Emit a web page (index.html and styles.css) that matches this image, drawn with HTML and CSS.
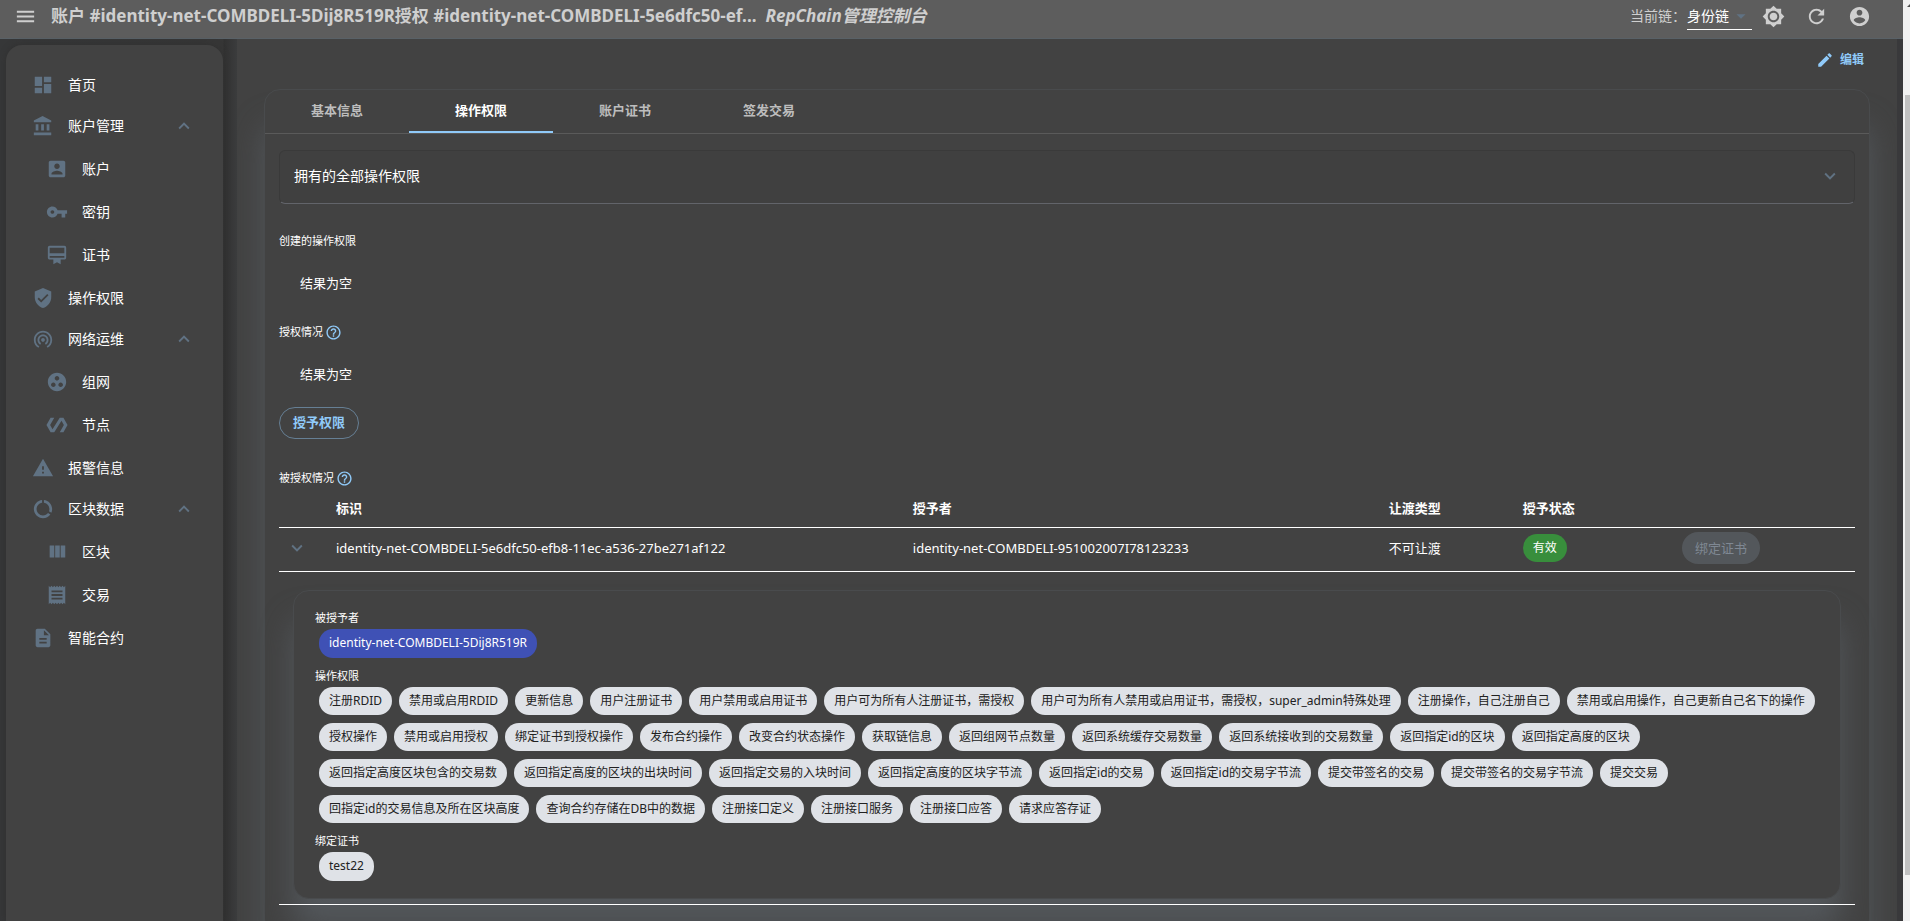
FILE: index.html
```html
<!DOCTYPE html>
<html lang="zh-CN">
<head>
<meta charset="utf-8">
<title>RepChain管理控制台</title>
<link rel="stylesheet" href="styles.css">
</head>
<body>
<svg class="sprite" aria-hidden="true">
  <symbol id="menu" viewBox="0 0 24 24"><path d="M3 18h18v-2H3v2zm0-5h18v-2H3v2zm0-7v2h18V6H3z"/></symbol>
  <symbol id="dashboard" viewBox="0 0 24 24"><path d="M3 13h8V3H3v10zm0 8h8v-6H3v6zm10 0h8V11h-8v10zm0-18v6h8V3h-8z"/></symbol>
  <symbol id="bank" viewBox="0 0 24 24"><path d="M4 10v7h3v-7H4zm6 0v7h3v-7h-3zM2 22h19v-3H2v3zm14-12v7h3v-7h-3zm-4.500-9L2 6v2h19V6l-9.500-5z"/></symbol>
  <symbol id="account-box" viewBox="0 0 24 24"><path d="M3 5v14c0 1.100.890 2 2 2h14c1.100 0 2-.9 2-2V5c0-1.100-.9-2-2-2H5c-1.110 0-2 .9-2 2zm12 4c0 1.660-1.340 3-3 3s-3-1.340-3-3 1.340-3 3-3 3 1.340 3 3zm-9 8c0-2 4-3.100 6-3.100s6 1.100 6 3.100v1H6v-1z"/></symbol>
  <symbol id="key" viewBox="0 0 24 24"><path d="M12.650 10C11.830 7.670 9.610 6 7 6c-3.310 0-6 2.690-6 6s2.690 6 6 6c2.610 0 4.830-1.670 5.650-4H17v4h4v-4h2v-4H12.650zM7 14c-1.100 0-2-.9-2-2s.9-2 2-2 2 .9 2 2-.9 2-2 2z"/></symbol>
  <symbol id="membership" viewBox="0 0 24 24"><path d="M20 2H4c-1.110 0-2 .89-2 2v11c0 1.110.890 2 2 2h4v5l4-2 4 2v-5h4c1.110 0 2-.89 2-2V4c0-1.110-.89-2-2-2zm0 13H4v-2h16v2zm0-5H4V4h16v6z"/></symbol>
  <symbol id="shield" viewBox="0 0 24 24"><path d="M12 1L3 5v6c0 5.550 3.840 10.740 9 12 5.160-1.260 9-6.450 9-12V5l-9-4zm-2 16l-4-4 1.410-1.410L10 14.170l6.590-6.590L18 9l-8 8z"/></symbol>
  <symbol id="tethering" viewBox="0 0 24 24"><path d="M12 11c-1.100 0-2 .9-2 2s.9 2 2 2 2-.9 2-2-.9-2-2-2zm6 2c0-3.310-2.690-6-6-6s-6 2.690-6 6c0 2.220 1.210 4.150 3 5.190l1-1.740c-1.190-.7-2-1.970-2-3.450 0-2.210 1.790-4 4-4s4 1.790 4 4c0 1.480-.81 2.750-2 3.450l1 1.740c1.790-1.040 3-2.970 3-5.190zM12 3C6.480 3 2 7.480 2 13c0 3.700 2.010 6.920 4.990 8.650l1-1.730C5.610 18.530 4 15.960 4 13c0-4.420 3.580-8 8-8s8 3.580 8 8c0 2.960-1.610 5.530-4 6.920l1 1.730c2.990-1.730 5-4.950 5-8.650 0-5.520-4.480-10-10-10z"/></symbol>
  <symbol id="group-work" viewBox="0 0 24 24"><path d="M12 2C6.480 2 2 6.480 2 12s4.480 10 10 10 10-4.480 10-10S17.520 2 12 2zM8 17.500c-1.380 0-2.500-1.120-2.500-2.500s1.120-2.500 2.500-2.500 2.500 1.120 2.500 2.500-1.120 2.500-2.500 2.500zM9.500 8c0-1.380 1.120-2.500 2.500-2.500s2.500 1.120 2.500 2.500-1.120 2.500-2.500 2.500S9.500 9.380 9.500 8zm6.500 9.500c-1.380 0-2.500-1.120-2.500-2.500s1.120-2.500 2.500-2.500 2.500 1.120 2.500 2.500-1.120 2.500-2.500 2.500z"/></symbol>
  <symbol id="polymer" viewBox="0 0 24 24"><path d="M19 4h-4L7.110 16.630 4.500 12 9 4H5L.5 12 5 20h4l7.890-12.630L19.500 12 15 20h4l4.500-8z"/></symbol>
  <symbol id="warning" viewBox="0 0 24 24"><path d="M1 21h22L12 2 1 21zm12-3h-2v-2h2v2zm0-4h-2v-4h2v4z"/></symbol>
  <symbol id="data-usage" viewBox="0 0 24 24"><path d="M13 2.050v3.030c3.390.490 6 3.390 6 6.920 0 .9-.18 1.750-.48 2.540l2.600 1.530c.56-1.240.880-2.620.880-4.070 0-5.180-3.950-9.450-9-9.950zM12 19c-3.870 0-7-3.130-7-7 0-3.530 2.610-6.430 6-6.920V2.050c-5.060.500-9 4.760-9 9.950 0 5.520 4.470 10 9.990 10 3.310 0 6.240-1.610 8.060-4.090l-2.600-1.530C16.170 17.980 14.210 19 12 19z"/></symbol>
  <symbol id="columns" viewBox="0 0 24 24"><path d="M10 18h5V5h-5v13zm-6 0h5V5H4v13zM16 5v13h5V5h-5z"/></symbol>
  <symbol id="receipt" viewBox="0 0 24 24"><path d="M18 17H6v-2h12v2zm0-4H6v-2h12v2zm0-4H6V7h12v2zM3 22l1.500-1.500L6 22l1.500-1.500L9 22l1.500-1.500L12 22l1.500-1.500L15 22l1.500-1.500L18 22l1.500-1.500L21 22V2l-1.500 1.500L18 2l-1.500 1.500L15 2l-1.500 1.500L12 2l-1.500 1.500L9 2 7.500 3.500 6 2 4.500 3.500 3 2v20z"/></symbol>
  <symbol id="description" viewBox="0 0 24 24"><path d="M14 2H6c-1.100 0-1.990.9-1.990 2L4 20c0 1.100.890 2 1.990 2H18c1.100 0 2-.9 2-2V8l-6-6zm2 16H8v-2h8v2zm0-4H8v-2h8v2zm-3-5V3.500L18.500 9H13z"/></symbol>
  <symbol id="brightness" viewBox="0 0 24 24"><path d="M20 8.690V4h-4.690L12 .69 8.690 4H4v4.690L.69 12 4 15.310V20h4.690L12 23.310 15.310 20H20v-4.690L23.310 12 20 8.690zM12 18c-3.310 0-6-2.690-6-6s2.690-6 6-6 6 2.690 6 6-2.690 6-6 6zm0-10c-2.210 0-4 1.790-4 4s1.790 4 4 4 4-1.790 4-4-1.790-4-4-4z"/></symbol>
  <symbol id="refresh" viewBox="0 0 24 24"><path d="M17.650 6.350C16.200 4.900 14.210 4 12 4c-4.420 0-7.990 3.580-7.990 8s3.570 8 7.990 8c3.730 0 6.840-2.550 7.730-6h-2.080c-.82 2.330-3.040 4-5.650 4-3.310 0-6-2.690-6-6s2.690-6 6-6c1.660 0 3.140.690 4.220 1.780L13 11h7V4l-2.350 2.350z"/></symbol>
  <symbol id="person" viewBox="0 0 24 24"><path d="M12 2C6.480 2 2 6.480 2 12s4.480 10 10 10 10-4.480 10-10S17.520 2 12 2zm0 3c1.660 0 3 1.340 3 3s-1.340 3-3 3-3-1.340-3-3 1.340-3 3-3zm0 14.200c-2.500 0-4.710-1.280-6-3.220.030-1.990 4-3.080 6-3.080 1.990 0 5.970 1.090 6 3.080-1.290 1.940-3.500 3.220-6 3.220z"/></symbol>
  <symbol id="edit" viewBox="0 0 24 24"><path d="M3 17.250V21h3.750L17.810 9.940l-3.750-3.750L3 17.250zM20.710 7.040c.39-.39.390-1.020 0-1.410l-2.340-2.340c-.39-.39-1.020-.39-1.410 0l-1.830 1.830 3.750 3.750 1.830-1.830z"/></symbol>
  <symbol id="help" viewBox="0 0 24 24"><path d="M11 18h2v-2h-2v2zm1-16C6.480 2 2 6.480 2 12s4.480 10 10 10 10-4.480 10-10S17.520 2 12 2zm0 18c-4.410 0-8-3.590-8-8s3.590-8 8-8 8 3.590 8 8-3.590 8-8 8zm0-14c-2.210 0-4 1.790-4 4h2c0-1.100.9-2 2-2s2 .9 2 2c0 2-3 1.750-3 5h2c0-2.250 3-2.500 3-5 0-2.210-1.790-4-4-4z"/></symbol>
  <symbol id="less" viewBox="0 0 24 24"><path d="M12 8l-6 6 1.410 1.410L12 10.830l4.590 4.580L18 14z"/></symbol>
  <symbol id="more" viewBox="0 0 24 24"><path d="M16.590 8.590L12 13.170 7.410 8.590 6 10l6 6 6-6z"/></symbol>
  <symbol id="drop" viewBox="0 0 24 24"><path d="M7 10l5 5 5-5z"/></symbol>
</svg>

<div class="window">
  <div class="app">
    <header class="appbar">
      <button class="icon-button" type="button" aria-label="菜单"><svg><use href="#menu"/></svg></button>
      <h1 class="page-title">账户 #identity-net-COMBDELI-5Dij8R519R授权 #identity-net-COMBDELI-5e6dfc50-ef...</h1>
      <em class="brand">RepChain管理控制台</em>
      <div class="appbar-tools">
        <label class="chain-label" for="chain">当前链：</label>
        <span class="chain-field">
          <select id="chain" class="chain-select"><option>身份链</option></select>
          <svg class="chain-arrow"><use href="#drop"/></svg>
        </span>
        <button class="icon-button" type="button" aria-label="主题"><svg><use href="#brightness"/></svg></button>
        <button class="icon-button" type="button" aria-label="刷新"><svg><use href="#refresh"/></svg></button>
        <button class="icon-button" type="button" aria-label="用户"><svg><use href="#person"/></svg></button>
      </div>
    </header>

    <div class="body">
      <div class="sidebar">
        <nav class="side-paper">
          <a class="item" href="#"><svg><use href="#dashboard"/></svg>首页</a>
          <button class="item group" type="button"><svg><use href="#bank"/></svg>账户管理<svg class="toggle"><use href="#less"/></svg></button>
          <a class="item sub" href="#"><svg><use href="#account-box"/></svg>账户</a>
          <a class="item sub" href="#"><svg><use href="#key"/></svg>密钥</a>
          <a class="item sub" href="#"><svg><use href="#membership"/></svg>证书</a>
          <a class="item" href="#"><svg><use href="#shield"/></svg>操作权限</a>
          <button class="item group" type="button"><svg><use href="#tethering"/></svg>网络运维<svg class="toggle"><use href="#less"/></svg></button>
          <a class="item sub" href="#"><svg><use href="#group-work"/></svg>组网</a>
          <a class="item sub" href="#"><svg><use href="#polymer"/></svg>节点</a>
          <a class="item" href="#"><svg><use href="#warning"/></svg>报警信息</a>
          <button class="item group" type="button"><svg><use href="#data-usage"/></svg>区块数据<svg class="toggle"><use href="#less"/></svg></button>
          <a class="item sub" href="#"><svg><use href="#columns"/></svg>区块</a>
          <a class="item sub" href="#"><svg><use href="#receipt"/></svg>交易</a>
          <a class="item" href="#"><svg><use href="#description"/></svg>智能合约</a>
        </nav>
      </div>

      <main class="content">
        <div class="actions">
          <a class="edit-link" href="#"><svg><use href="#edit"/></svg>编辑</a>
        </div>
        <section class="card">
          <div class="tabs" role="tablist">
            <button class="tab" type="button" role="tab">基本信息</button>
            <button class="tab active" type="button" role="tab" aria-selected="true">操作权限</button>
            <button class="tab" type="button" role="tab">账户证书</button>
            <button class="tab" type="button" role="tab">签发交易</button>
          </div>
          <div class="card-body">
            <button class="accordion" type="button">拥有的全部操作权限<svg><use href="#more"/></svg></button>

            <h2 class="field-label first">创建的操作权限</h2>
            <p class="empty">结果为空</p>
            <h2 class="field-label">授权情况<svg><use href="#help"/></svg></h2>
            <p class="empty">结果为空</p>
            <button class="grant" type="button">授予权限</button>
            <h2 class="field-label">被授权情况<svg><use href="#help"/></svg></h2>

            <table class="grants">
              <colgroup><col class="c-toggle"><col class="c-id"><col class="c-grantor"><col class="c-type"><col class="c-state"><col></colgroup>
              <thead>
                <tr><th></th><th>标识</th><th>授予者</th><th>让渡类型</th><th>授予状态</th><th></th></tr>
              </thead>
              <tbody>
                <tr class="data-row">
                  <td class="toggle-cell"><button class="row-toggle" type="button" aria-label="收起"><svg><use href="#more"/></svg></button></td>
                  <td>identity-net-COMBDELI-5e6dfc50-efb8-11ec-a536-27be271af122</td>
                  <td>identity-net-COMBDELI-951002007I78123233</td>
                  <td>不可让渡</td>
                  <td><span class="chip valid">有效</span></td>
                  <td><button class="bind" type="button" disabled>绑定证书</button></td>
                </tr>
                <tr>
                  <td class="detail-cell" colspan="6">
                    <div class="detail">
                      <h3 class="detail-label">被授予者</h3>
                      <div class="chips"><a class="chip tall primary" href="#">identity-net-COMBDELI-5Dij8R519R</a></div>
                      <h3 class="detail-label">操作权限</h3>
                      <div class="chips">
                        <span class="chip">注册RDID</span>
                        <span class="chip">禁用或启用RDID</span>
                        <span class="chip">更新信息</span>
                        <span class="chip">用户注册证书</span>
                        <span class="chip">用户禁用或启用证书</span>
                        <span class="chip">用户可为所有人注册证书，需授权</span>
                        <span class="chip">用户可为所有人禁用或启用证书，需授权，super_admin特殊处理</span>
                        <span class="chip">注册操作，自己注册自己</span>
                        <span class="chip">禁用或启用操作，自己更新自己名下的操作</span>
                        <span class="chip">授权操作</span>
                        <span class="chip">禁用或启用授权</span>
                        <span class="chip">绑定证书到授权操作</span>
                        <span class="chip">发布合约操作</span>
                        <span class="chip">改变合约状态操作</span>
                        <span class="chip">获取链信息</span>
                        <span class="chip">返回组网节点数量</span>
                        <span class="chip">返回系统缓存交易数量</span>
                        <span class="chip">返回系统接收到的交易数量</span>
                        <span class="chip">返回指定id的区块</span>
                        <span class="chip">返回指定高度的区块</span>
                        <span class="chip">返回指定高度区块包含的交易数</span>
                        <span class="chip">返回指定高度的区块的出块时间</span>
                        <span class="chip">返回指定交易的入块时间</span>
                        <span class="chip">返回指定高度的区块字节流</span>
                        <span class="chip">返回指定id的交易</span>
                        <span class="chip">返回指定id的交易字节流</span>
                        <span class="chip">提交带签名的交易</span>
                        <span class="chip">提交带签名的交易字节流</span>
                        <span class="chip">提交交易</span>
                        <span class="chip">回指定id的交易信息及所在区块高度</span>
                        <span class="chip">查询合约存储在DB中的数据</span>
                        <span class="chip">注册接口定义</span>
                        <span class="chip">注册接口服务</span>
                        <span class="chip">注册接口应答</span>
                        <span class="chip">请求应答存证</span>
                      </div>
                      <h3 class="detail-label">绑定证书</h3>
                      <div class="chips"><a class="chip tall" href="#">test22</a></div>
                    </div>
                  </td>
                </tr>
              </tbody>
            </table>
          </div>
        </section>
      </main>
    </div>
  </div>
  <div class="scrollbar" aria-hidden="true"><div class="scroll-thumb"></div></div>
</div>
</body>
</html>
```

FILE: styles.css
```css
* { box-sizing: border-box; }

body {
  margin: 0;
  background: #424242;
  color: #fff;
  font: 13px/20px "Noto Sans", "Noto Sans CJK SC", sans-serif;
}

button, select { font: inherit; color: inherit; background: none; border: 0; padding: 0; }
button { cursor: pointer; }
a { color: inherit; text-decoration: none; }
h1, h2, h3, p { margin: 0; }
svg { fill: currentColor; flex: none; }

.sprite { display: none; }

.window { display: flex; height: 100vh; overflow: hidden; }
.app { flex: 1; min-width: 0; display: flex; flex-direction: column; }

.scrollbar { position: relative; width: 7px; overflow: hidden; background: #f1f1f1; padding: 95px 0 46px 2px; }
.scrollbar::before {
  content: "";
  position: absolute;
  left: 4px;
  top: 3px;
  border: 4px solid transparent;
  border-top: 0;
  border-bottom-color: #505050;
}
.scroll-thumb { height: 100%; background: #c1c1c1; }

/* App bar */
.appbar {
  display: flex;
  align-items: center;
  flex: none;
  height: 39px;
  padding: 0 32px 6px 14px;
  background: #5d5d5d;
  border-bottom: 1px solid #596167;
  color: #cfcfcf;
}
.icon-button { display: flex; }
.icon-button svg { width: 23px; height: 23px; }
.page-title {
  margin-left: 14px;
  overflow: hidden;
  white-space: nowrap;
  font-size: 17px;
  line-height: 24px;
}
.brand { margin-left: 9px; font-size: 17px; line-height: 24px; font-weight: 700; white-space: nowrap; }
.appbar-tools { display: flex; align-items: center; gap: 20px; margin-left: auto; }
.chain-label { margin-right: -19px; font-size: 14px; white-space: nowrap; }
.chain-field { position: relative; display: flex; margin-right: -10px; }
.chain-select {
  appearance: none;
  width: 65px;
  height: 27px;
  border-bottom: 1px solid #fff;
  border-radius: 0;
  color: #fff;
  font-size: 14px;
}
.chain-arrow { position: absolute; right: 0; top: 2px; width: 22px; height: 22px; color: #607283; pointer-events: none; }

/* Layout */
.body { display: flex; flex: 1; min-height: 0; }

.sidebar { display: flex; width: 237px; flex: none; padding: 6px 14px 0 6px; background: linear-gradient(90deg, #363738 0, #363636 223px, #313131 224px, #3b3c3d 237px); }
.side-paper {
  flex: 1;
  padding: 18px 28px 0 26px;
  background: #424242;
  border-radius: 16px 16px 0 0;
  box-shadow: 0 0 6px #303030;
}
.item {
  display: flex;
  align-items: center;
  width: 100%;
  height: 43px;
  gap: 14px;
  font-size: 14px;
  text-align: left;
}
.item svg { width: 22px; height: 22px; color: #607283; }
.item.group { height: 41px; padding-bottom: 2px; }
.item.sub { padding-left: 14px; }
.item .toggle { margin-left: auto; }

.content {
  flex: 1;
  min-width: 0;
  overflow: hidden;
  padding: 9px 27px 0;
  border-right: 6px solid #39393b;
}
.actions { display: flex; justify-content: flex-end; padding-right: 6px; }
.edit-link { display: flex; align-items: center; gap: 6px; height: 24px; color: #90caf9; font-size: 12px; font-weight: 700; }
.edit-link svg { width: 18px; height: 18px; }

.card {
  margin-top: 17px;
  min-height: 100%;
  border: 1px solid #494b4d;
  border-radius: 16px;
  background: #424242;
  box-shadow: 0 36px 30px #53575b;
}
.tabs { display: flex; height: 44px; border-bottom: 1px solid #5a5a5a; }
.tab { width: 144px; padding-bottom: 2px; color: #bdbdbd; font-weight: 700; border-bottom: 2px solid transparent; }
.tab.active { color: #fff; border-bottom-color: #90caf9; }

.card-body { padding: 16px 14px 32px; }
.accordion {
  display: flex;
  align-items: center;
  justify-content: space-between;
  width: 100%;
  height: 54px;
  padding: 0 13px 2px 14px;
  border: 1px solid #3a3a3a;
  border-bottom-color: #62646a;
  border-radius: 6px;
  background: #404040;
  font-size: 14px;
}
.accordion svg { width: 22px; height: 22px; color: #607283; }

.field-label { display: flex; align-items: center; gap: 2px; height: 20px; margin-top: 29px; font-size: 11px; font-weight: 400; }
.field-label.first { margin-top: 27px; }
.field-label svg { width: 17px; height: 17px; color: #90caf9; }
.empty { padding: 22px 21px 0; }
.grant {
  display: block;
  height: 32px;
  padding: 0 13px 2px;
  margin-top: 23px;
  border: 1px solid #667f94;
  border-radius: 16px;
  color: #90caf9;
  font-weight: 700;
}

/* Table */
.grants { width: 100%; table-layout: fixed; border-collapse: collapse; white-space: nowrap; }
.c-toggle { width: 57px; }
.c-id { width: 36.6%; }
.c-grantor { width: 30.2%; }
.c-type { width: 8.5%; }
.c-state { width: 10.1%; }
.grants th, .grants td { padding: 0; text-align: left; border-bottom: 1px solid #fff; }
.grants th { height: 39px; padding-top: 2px; font-weight: 700; }
.grants .data-row td { height: 44px; padding-bottom: 2px; }
.row-toggle { display: block; margin-left: 7px; height: 22px; }
.row-toggle svg { display: block; width: 22px; height: 22px; color: #607283; }
.bind { height: 32px; padding: 0 13px; border-radius: 16px; background: #53575b; color: #7f8893; }

.chip {
  display: inline-flex;
  align-items: center;
  height: 28px;
  padding: 0 10px;
  border-radius: 14px;
  background: #dfe2e7;
  color: #212121;
  font-size: 12px;
}
.chip.valid { background: #388e3c; color: #fff; }
.chip.tall { height: 29px; }
.chip.primary { background: #3f51b5; color: #fff; }

.grants .detail-cell { padding: 18px 14px 5px; white-space: normal; }
.detail {
  padding: 17px 21px 9px;
  border: 1px solid #494b4d;
  border-radius: 16px;
  background: #424242;
  box-shadow: 0 30px 30px #53575b;
}
.detail-label { height: 20px; font-size: 11px; font-weight: 400; }
.chips { display: flex; flex-wrap: wrap; gap: 8px 7px; padding: 1px 4px 8px; }
```
